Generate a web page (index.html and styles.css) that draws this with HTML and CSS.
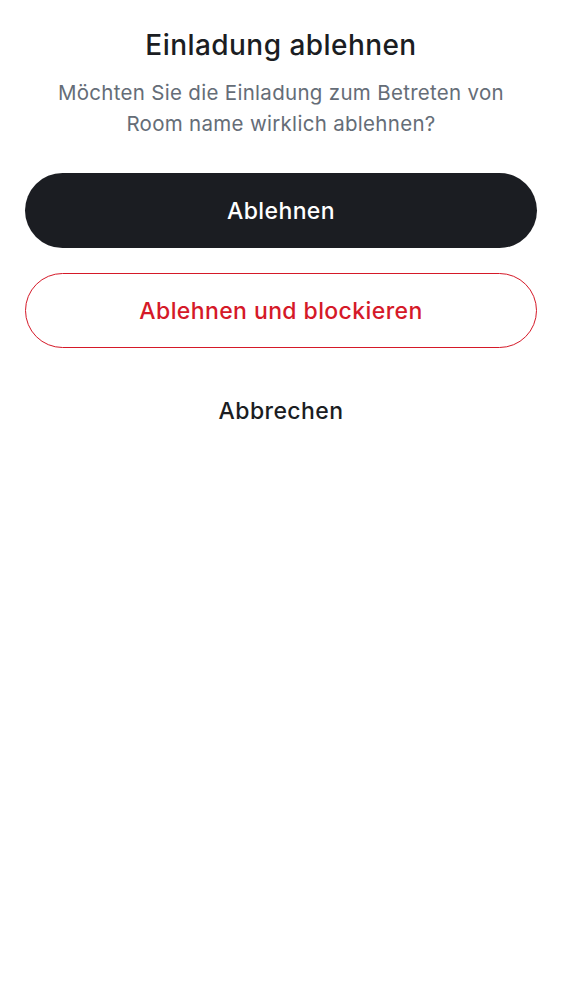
FILE: index.html
```html
<!DOCTYPE html>
<html lang="de">
<head>
<meta charset="utf-8">
<link rel="stylesheet" href="styles.css">
</head>
<body>
<div class="sheet">
  <h1 class="title">Einladung ablehnen</h1>
  <p class="subtitle">Möchten Sie die Einladung zum Betreten von Room name wirklich ablehnen?</p>
  <div class="actions">
    <button class="btn btn-primary">Ablehnen</button>
    <button class="btn btn-danger">Ablehnen und blockieren</button>
    <button class="btn btn-text">Abbrechen</button>
  </div>
</div>
</body>
</html>
```
FILE: styles.css
```css
html, body {
  margin: 0;
  padding: 0;
  background: #ffffff;
}
body {
  font-family: Inter, Roboto, sans-serif;
}
.sheet {
  padding: 25px 25px 0;
  display: flex;
  flex-direction: column;
  align-items: center;
}
.title {
  margin: 0;
  font-size: 28px;
  line-height: 40px;
  font-weight: 500;
  letter-spacing: 0.45px;
  color: #1b1d22;
  text-align: center;
}
.subtitle {
  margin: 12px 0 0;
  font-size: 20.5px;
  line-height: 31px;
  letter-spacing: 0.3px;
  color: #656d77;
  text-align: center;
  max-width: 470px;
}
.actions {
  align-self: stretch;
  display: flex;
  flex-direction: column;
  gap: 25px;
  margin-top: 34px;
}
.btn {
  font-family: Inter, Roboto, sans-serif;
  font-size: 23px;
  font-weight: 500;
  letter-spacing: 0.4px;
  height: 75px;
  border-radius: 38px;
  border: none;
  background: none;
  padding: 0;
  width: 100%;
}
.btn-primary {
  background: #1b1d22;
  color: #ffffff;
}
.btn-danger {
  border: 1.5px solid #d51928;
  color: #d51928;
  background: #fff;
}
.btn-text {
  color: #1b1d22;
}
```
